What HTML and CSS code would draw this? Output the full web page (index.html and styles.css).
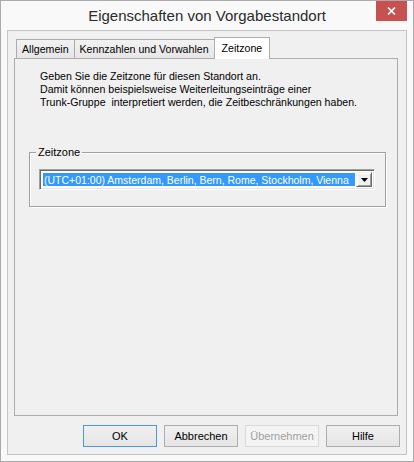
FILE: index.html
```html
<!DOCTYPE html>
<html lang="de">
<head>
  <meta charset="UTF-8">
  <title>Eigenschaften von Vorgabestandort</title>
  <link rel="stylesheet" href="styles.css">
</head>
<body>
<div class="window">
  <header class="titlebar">
    <span class="title">Eigenschaften von Vorgabestandort</span>
    <button class="close" type="button" aria-label="Schließen">
      <svg width="9" height="8" viewBox="0 0 9 8"><path d="M1 0.5 8 7.5M8 0.5 1 7.5" stroke="#fff" stroke-width="1.7"/></svg>
    </button>
  </header>
  <main class="client">
    <nav class="tabs">
      <div class="tab">Allgemein</div>
      <div class="tab">Kennzahlen und Vorwahlen</div>
      <div class="tab active">Zeitzone</div>
    </nav>
    <section class="panel">
      <p class="intro">Geben Sie die Zeitzone für diesen Standort an.<br>
        Damit können beispielsweise Weiterleitungseinträge einer<br>
        Trunk-Gruppe&nbsp; interpretiert werden, die Zeitbeschränkungen haben.</p>
      <fieldset class="group">
        <legend>Zeitzone</legend>
        <div class="combo">
          <span class="selection">(UTC+01:00) Amsterdam, Berlin, Bern, Rome, Stockholm, Vienna</span>
          <span class="drop">
            <svg width="7" height="4" viewBox="0 0 7 4"><path d="M0 0h7L3.5 4z" fill="#000"/></svg>
          </span>
        </div>
      </fieldset>
    </section>
    <footer class="buttons">
      <button type="button" class="default">OK</button>
      <button type="button">Abbrechen</button>
      <button type="button" disabled>Übernehmen</button>
      <button type="button">Hilfe</button>
    </footer>
  </main>
</div>
</body>
</html>
```

FILE: styles.css
```css
* {
  box-sizing: border-box;
}

body {
  margin: 0;
  font-family: "Liberation Sans", Arial, sans-serif;
  font-size: 10.6px;
  color: #000;
}

.window {
  background: #f9f9f9;
  border: 1px solid #aaaaaa;
  display: flex;
  flex-direction: column;
  height: 462px;
  padding: 0 6px 6px;
  width: 414px;
}

.titlebar {
  display: grid;
  grid-template-columns: 1fr auto 1fr;
  height: 29px;
}

.title {
  color: #2b2b2b;
  font-size: 15px;
  grid-column: 2;
  line-height: 29px;
  white-space: nowrap;
}

.close {
  align-items: center;
  align-self: start;
  background: #c75050;
  border: none;
  display: flex;
  grid-column: 3;
  height: 20px;
  justify-content: center;
  justify-self: end;
  padding: 0;
  width: 31px;
}

.client {
  background: #f0f0f0;
  border: 1px solid #c4c4c4;
  display: flex;
  flex: 1;
  flex-direction: column;
  padding: 6px 6px 7px;
}

.tabs {
  align-items: flex-end;
  display: flex;
  font-size: 10.6px;
  padding-left: 2px;
}

.tab {
  background: linear-gradient(#f2f2f2, #e6e6e6);
  border: 1px solid #acacac;
  border-bottom: 0;
  height: 19px;
  line-height: 18px;
  margin-left: -1px;
  padding: 0 5px;
  white-space: nowrap;

  &:first-child {
    margin-left: 0;
  }

  &.active {
    background: #fff;
    height: 22px;
    line-height: 20px;
    margin-bottom: -1px;
    padding: 0 7px;
    position: relative;
    z-index: 1;
  }
}

.panel {
  border: 1px solid #adadad;
  flex: 1;
  margin-right: 2px;
  padding: 11px 11px 0 14px;
}

.intro {
  line-height: 13px;
  margin: 0 0 0 11px;
  white-space: nowrap;
}

.group {
  border: 1px solid #a0a0a0;
  box-shadow: inset 1px 1px #fff, 1px 1px #fff;
  margin: 37px 0 0;
  min-width: 0;
  padding: 10px 10px 16px 9px;

  & legend {
    background: #f0f0f0;
    font-size: 11px;
    line-height: 13px;
    margin-left: -3px;
    padding: 0 2px;
  }
}

.combo {
  background: #fff;
  border: 1px solid;
  border-color: #a0a0a0 #fff #fff #a0a0a0;
  box-shadow: inset 1px 1px #696969, inset -1px -1px #e3e3e3;
  display: flex;
  height: 21px;
  padding: 2px;
}

.selection {
  background: #3399ff;
  color: #fff;
  flex: 1;
  font-size: 10.5px;
  line-height: 15px;
  margin: 1px;
  overflow: hidden;
  padding-left: 1px;
  white-space: nowrap;
}

.drop {
  align-items: center;
  background: #f0f0f0;
  border: 1px solid;
  border-color: #f0f0f0 #696969 #696969 #f0f0f0;
  box-shadow: inset 1px 1px #fff, inset -1px -1px #a0a0a0;
  display: flex;
  justify-content: center;
  width: 16px;
}

.buttons {
  display: flex;
  gap: 7px;
  justify-content: flex-end;
  margin-top: 9px;

  & button {
    background: linear-gradient(#f0f0f0, #e5e5e5);
    border: 1px solid #adadad;
    color: #000;
    font: inherit;
    font-size: 11px;
    height: 22px;
    padding: 0;
    width: 74px;
  }

  & .default {
    border-color: #4a97e0;
  }

  & button:disabled {
    background: #f4f4f4;
    border-color: #d9d9d9;
    color: #a0a0a0;
  }
}
```
